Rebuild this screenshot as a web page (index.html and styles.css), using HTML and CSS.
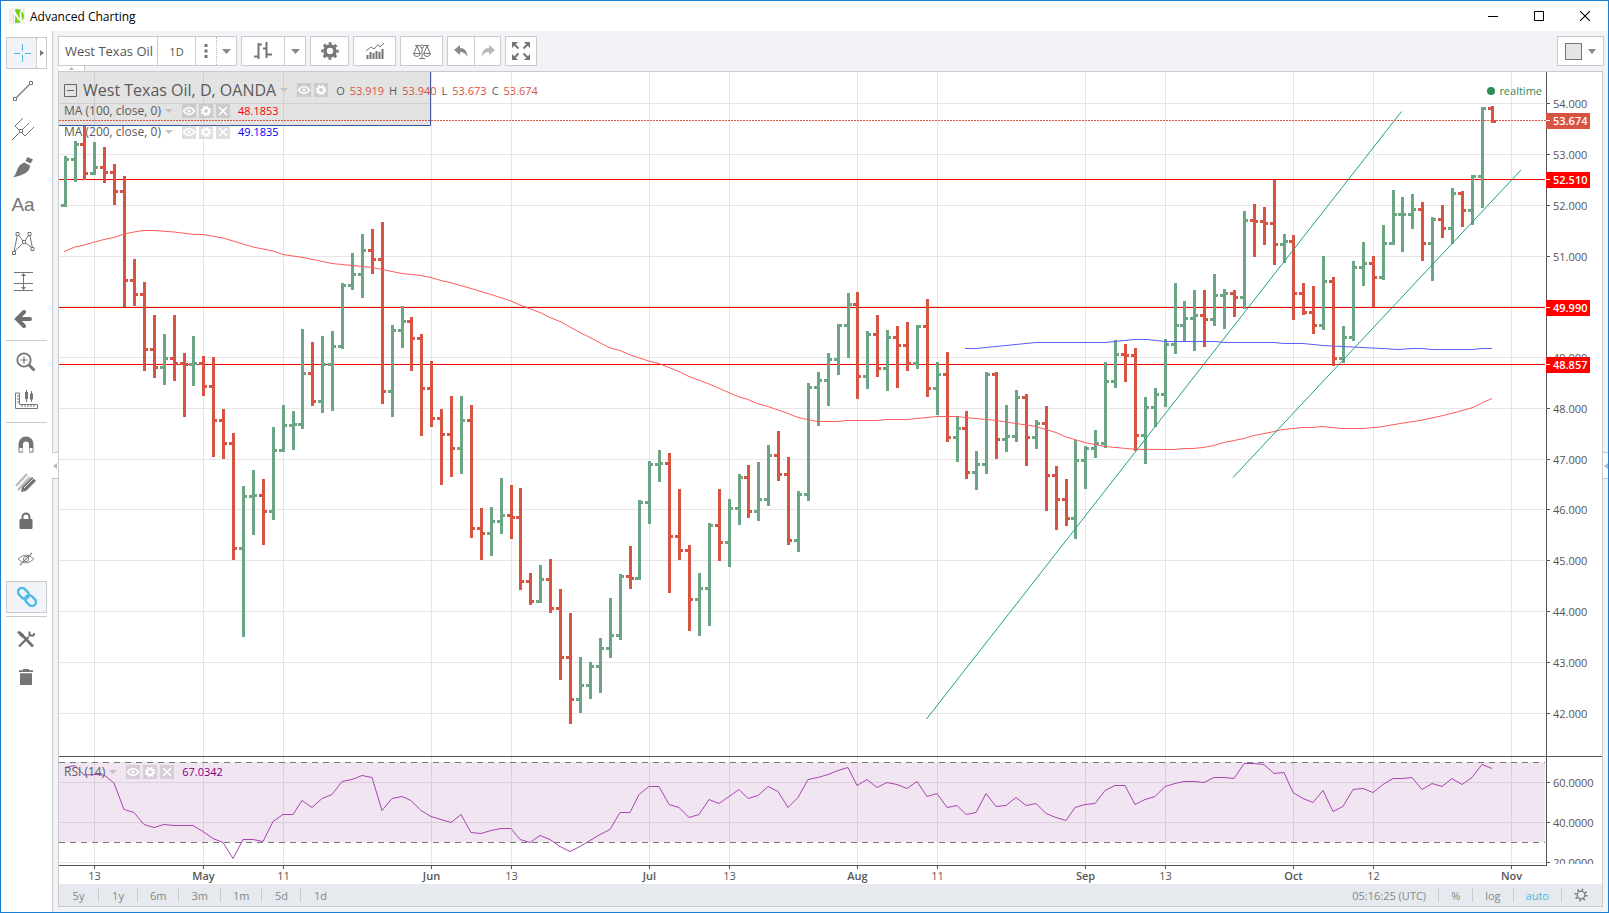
FILE: index.html
```html
<!DOCTYPE html>
<html lang="en">
<head>
<meta charset="utf-8">
<title>Advanced Charting</title>
<link rel="stylesheet" href="styles.css">
</head>
<body>
<header class="titlebar">
  <svg class="logo" width="16" height="16" viewBox="0 0 16 16"><rect width="16" height="16" fill="#efefef"/><circle cx="8" cy="8" r="7" fill="#7fd013"/><path d="M0 6C2 2 4 1 6.500 1L4 7V15C1.500 13.500 0 10 0 6Z" fill="#efefef"/><path d="M5 14.500C5.500 11 5.500 7 5 3C7.500 8 9.500 12 13 13.500C11 9 11 5 13 2" fill="none" stroke="#fff" stroke-width="1.700"/></svg>
  <h1 class="title">Advanced Charting</h1>
  <div class="window-buttons">
    <button class="win" aria-label="Minimize"><svg width="10" height="10" viewBox="0 0 10 10"><path d="M0 5.500H10" stroke="#000"/></svg></button>
    <button class="win" aria-label="Maximize"><svg width="10" height="10" viewBox="0 0 10 10"><path d="M.5.500H9.500V9.500H.5Z" fill="none" stroke="#000"/></svg></button>
    <button class="win" aria-label="Close"><svg width="10" height="10" viewBox="0 0 10 10"><path d="M0 0L10 10M10 0L0 10" stroke="#000" stroke-width="1.100"/></svg></button>
  </div>
</header>
<div class="workspace">
  <nav class="sidebar" aria-label="Drawing tools">
    <div class="tool split">
      <button class="split-main" aria-label="Cross"><svg width="18" height="18" viewBox="0 0 18 18"><path d="M9.500 0V7M9.500 11V18M1 9.500H7M12 9.500H18" stroke="#4bb9e6"/></svg></button>
      <button class="split-more" aria-label="More cursors"><svg width="4" height="6" viewBox="0 0 4 6"><path d="M0 0L4 3L0 6Z" fill="#777"/></svg></button>
    </div>
    <button class="tool" aria-label="Trend line"><svg width="22" height="22" viewBox="0 0 22 22"><path d="M4 18L17.500 4.500" stroke="#757575" stroke-width="1.200"/><path d="M1.500 17.500h3v3h-3zM17.500 1.500h3v3h-3z" fill="#fff" stroke="#757575"/></svg></button>
    <button class="tool" aria-label="Pitchfork"><svg width="24" height="24" viewBox="0 0 24 24"><path d="M1 23L18 6M12 1L4 9L14 19L23 10" fill="none" stroke="#757575"/><path d="M8.500 12.500h3v3h-3z" fill="#fff" stroke="#757575"/></svg></button>
    <button class="tool" aria-label="Brush"><svg width="22" height="22" viewBox="0 0 22 22"><path d="M15.500 1L21 3.500L18.500 7.500L13.500 5Z" fill="#757575"/><path d="M12.500 6.500L18 9.500C18 16 12 19 1 21.500C6 17 4 9 12.500 6.500Z" fill="#757575"/></svg></button>
    <button class="tool tool-text" aria-label="Text">Aa</button>
    <button class="tool" aria-label="Pattern"><svg width="24" height="24" viewBox="0 0 24 24"><path d="M3 21L6.500 3L13 11L18.500 3L21.500 17L13 11Z" fill="none" stroke="#757575"/><path d="M1.500 20.500h3v3h-3zM5 1.500h3v3h-3zM11.500 9.500h3v3h-3zM17 1.500h3v3h-3zM20 16.500h3v3h-3z" fill="#fff" stroke="#757575"/></svg></button>
    <button class="tool" aria-label="Position"><svg width="20" height="20" viewBox="0 0 20 20"><path d="M1 1.500H20M1 12.500H20M1 19.500H20M10.500 4V18" stroke="#757575"/><path d="M8 5L10.500 2L13 5ZM8 16L10.500 19L13 16Z" fill="#757575"/></svg></button>
    <button class="tool" aria-label="Arrow"><svg width="18" height="18" viewBox="0 0 18 18"><path d="M10 2L3 9L10 16M3 9H16" fill="none" stroke="#6f6f6f" stroke-width="4" stroke-linecap="round"/></svg></button>
    <hr class="rule">
    <button class="tool low" aria-label="Zoom in"><svg width="20" height="20" viewBox="0 0 20 20"><circle cx="8" cy="8" r="6.700" fill="none" stroke="#757575" stroke-width="1.800"/><path d="M8 4.500V11.500M4.500 8H11.500" stroke="#757575" stroke-width="1.200"/><path d="M13 13L18.500 18.500" stroke="#757575" stroke-width="3"/></svg></button>
    <button class="tool low" aria-label="Measure"><svg width="24" height="20" viewBox="0 0 24 20"><path d="M1.500 3h4v11.500h18v4h-22z" fill="none" stroke="#757575"/><path d="M3 6h2M3 9h2M3 12h2M8 17v-2M11 17v-2M14 17v-2M17 17v-2M20 17v-2M12.500 0v12M17.500 1v11" stroke="#757575"/><path d="M11 2h3v7h-3zM16 3.500h3v6h-3z" fill="#757575"/></svg></button>
    <hr class="rule wide">
    <button class="tool low" aria-label="Magnet"><svg width="16" height="18" viewBox="0 0 16 18"><path d="M.5 16.500V8a7.500 7.500 0 0 1 15 0V16.500H11V8.500a3 3 0 0 0-6 0V16.500Z" fill="#757575"/><path d="M1.500 12h3v3.500h-3zM11.500 12h3v3.500h-3z" fill="#fff"/></svg></button>
    <button class="tool low" aria-label="Stay in drawing mode"><svg width="22" height="22" viewBox="0 0 22 22"><path d="M1 14L12 2M3 18L15 5" stroke="#bcbcbc" stroke-width="2.500"/><path d="M7 15L17 5L21 9L11 19L6 20Z" fill="#757575"/><path d="M9 16L18 7" stroke="#fff" stroke-width=".8"/></svg></button>
    <button class="tool low" aria-label="Lock drawings"><svg width="14" height="18" viewBox="0 0 14 18"><rect x=".5" y="7" width="13" height="10" rx="1" fill="#6f6f6f"/><path d="M3.500 8V5a3.500 3.500 0 0 1 7 0V8" fill="none" stroke="#6f6f6f" stroke-width="2"/></svg></button>
    <button class="tool low" aria-label="Hide drawings"><svg width="18" height="14" viewBox="0 0 20 16"><path d="M1 8Q10-1 19 8Q10 17 1 8Z" fill="none" stroke="#757575"/><circle cx="10" cy="8" r="3" fill="none" stroke="#757575"/><path d="M3 15L17 1" stroke="#757575" stroke-width="1.200"/></svg></button>
    <button class="tool low active" aria-label="Link"><svg width="20" height="20" viewBox="0 0 20 20"><g transform="rotate(45 10 10)" fill="none" stroke="#4bb9e6" stroke-width="2.400"><rect x="-1" y="6" width="12" height="8" rx="4"/><rect x="9" y="6" width="12" height="8" rx="4"/></g></svg></button>
    <hr class="rule wide">
    <button class="tool low" aria-label="Tool settings"><svg width="18" height="18" viewBox="0 0 18 18"><path d="M4.500 4.500L16 16.500" stroke="#6f6f6f" stroke-width="2.600"/><path d="M0 2L2.500 1L7 4.500L4.500 7.500Z" fill="#6f6f6f"/><path d="M2 16.500L11.500 7" stroke="#6f6f6f" stroke-width="2.200"/><path d="M12.500 1.500V5.500H16.500L17.500 3" fill="none" stroke="#6f6f6f" stroke-width="2"/></svg></button>
    <button class="tool low" aria-label="Remove"><svg width="14" height="16" viewBox="0 0 14 16"><path d="M4 0h6v1.200h4V3H0V1.200H4ZM1 4.200h12V16H1Z" fill="#757575"/></svg></button>
  </nav>
  <main class="content">
    <button class="edge edge-left" aria-label="Hide sidebar"><svg width="4" height="6" viewBox="0 0 4 6"><path d="M4 0L0 3L4 6Z" fill="#b8b8b8"/></svg></button>
    <div class="toolbar">
      <div class="group">
        <button class="btn symbol">West Texas Oil</button>
        <button class="btn interval">1D</button>
        <button class="btn dots" aria-label="Intervals"><svg width="4" height="16" viewBox="0 0 4 16"><path d="M.5 1h3v3h-3zM.5 6.500h3v3h-3zM.5 12h3v3h-3z" fill="#757575"/></svg></button>
        <button class="btn caret" aria-label="More intervals"><svg width="9" height="5" viewBox="0 0 9 5"><path d="M0 0H9L4.500 5Z" fill="#8a8a8a"/></svg></button>
      </div>
      <div class="group">
        <button class="btn style" aria-label="Bars"><svg width="18" height="18" viewBox="0 0 18 18"><path d="M4.500 1V17M0 14.500H4M4 2.500H8M12.500 0V16M9 6.500H12M13 12.500H18" fill="none" stroke="#757575" stroke-width="2"/></svg></button>
        <button class="btn style-more" aria-label="Chart styles"><svg width="9" height="5" viewBox="0 0 9 5"><path d="M0 0H9L4.500 5Z" fill="#8a8a8a"/></svg></button>
      </div>
      <div class="group"><button class="btn gear" aria-label="Settings"><svg width="18" height="18" viewBox="-9 -9 18 18"><circle r="5" fill="none" stroke="#757575" stroke-width="3.600"/><circle r="7.600" fill="none" stroke="#757575" stroke-width="2.400" stroke-dasharray="3 2.970" stroke-dashoffset="1.500"/></svg></button></div>
      <div class="group"><button class="btn indicators" aria-label="Indicators"><svg width="18" height="16" viewBox="0 0 18 16"><path d="M1.500 16V12M4.500 16V9M7.500 16V10M10.500 16V8M13.500 16V9M16.500 16V6" stroke="#757575" stroke-width="2"/><path d="M0 8L5 4L8 6L12 1.500L14 4L18 0" fill="none" stroke="#757575"/></svg></button></div>
      <div class="group"><button class="btn compare" aria-label="Compare"><svg width="18" height="15" viewBox="0 0 18 15"><path d="M2 1.500H7.500M10.500 1.500H16M6 14.500H12M9 4V14M4 2L1 9M4 2L7 9M14 2L11 9M14 2L17 9" fill="none" stroke="#757575"/><circle cx="9" cy="2.500" r="1.500" fill="none" stroke="#757575"/><path d="M.5 9.500h7q-.5 3-3.500 3t-3.500-3zM10.500 9.500h7q-.5 3-3.500 3t-3.500-3z" fill="#fff" stroke="#757575"/></svg></button></div>
      <div class="group">
        <button class="btn undo" aria-label="Undo"><svg width="14" height="12" viewBox="0 0 14 12"><path d="M0 5L6 0V3Q13 3 13.500 12Q11 7 6 7V10Z" fill="#8a8a8a"/></svg></button>
        <button class="btn redo" aria-label="Redo"><svg width="14" height="12" viewBox="0 0 14 12"><path d="M14 5L8 0V3Q1 3 .5 12Q3 7 8 7V10Z" fill="#b8b8b8"/></svg></button>
      </div>
      <div class="group"><button class="btn full" aria-label="Fullscreen"><svg width="18" height="18" viewBox="0 0 18 18"><path d="M0 0H6L0 6ZM18 0H12L18 6ZM0 18H6L0 12ZM18 18H12L18 12Z" fill="#757575"/><path d="M2 2L6.500 6.500M16 2L11.500 6.500M2 16L6.500 11.500M16 16L11.500 11.500" stroke="#757575" stroke-width="2"/></svg></button></div>
      <div class="group layout"><button class="btn layout-btn" aria-label="Layout"><span class="swatch"></span><svg width="8" height="5" viewBox="0 0 8 5"><path d="M0 0H8L4 5Z" fill="#8a8a8a"/></svg></button></div>
    </div>
    <button class="toptab" aria-label="Hide toolbar"><svg width="5" height="3" viewBox="0 0 5 3"><path d="M0 3L2.500 0L5 3Z" fill="#b8b8b8"/></svg></button>
    <section class="frame">
      <div class="plot">
        <svg id="chart" class="chart" role="img" aria-label="West Texas Oil daily price chart"></svg>
        <div class="legend">
          <div class="line head">
            <svg width="13" height="13" viewBox="0 0 13 13"><path d="M.5.500H12.500V12.500H.5ZM3 6.500H10" fill="none" stroke="#666"/></svg>
            <h2 class="name">West Texas Oil, D, OANDA</h2>
            <i class="tri"></i>
            <span class="minis">
              <button class="mini" aria-label="Hide"><svg width="14" height="14" viewBox="0 0 14 14"><path d="M1.500 7Q7 0 12.500 7Q7 14 1.500 7Z" fill="none" stroke="#fff" stroke-width="1.400"/><circle cx="7" cy="7" r="1.600" fill="#fff"/></svg></button>
              <button class="mini" aria-label="Format"><svg width="14" height="14" viewBox="-7 -7 14 14"><circle r="3" fill="none" stroke="#fff" stroke-width="2"/><circle r="4.500" fill="none" stroke="#fff" stroke-width="1.600" stroke-dasharray="1.800 1.734"/></svg></button>
            </span>
            <span class="ohlc"><span>O</span><b>53.919</b><span>H</span><b>53.940</b><span>L</span><b>53.673</b><span>C</span><b>53.674</b></span>
          </div>
          <div class="line">
            <span class="study">MA (100, close, 0)</span><i class="tri"></i>
            <span class="minis">
              <button class="mini" aria-label="Hide"><svg width="14" height="14" viewBox="0 0 14 14"><path d="M1.500 7Q7 0 12.500 7Q7 14 1.500 7Z" fill="none" stroke="#fff" stroke-width="1.400"/><circle cx="7" cy="7" r="1.600" fill="#fff"/></svg></button>
              <button class="mini" aria-label="Format"><svg width="14" height="14" viewBox="-7 -7 14 14"><circle r="3" fill="none" stroke="#fff" stroke-width="2"/><circle r="4.500" fill="none" stroke="#fff" stroke-width="1.600" stroke-dasharray="1.800 1.734"/></svg></button>
              <button class="mini" aria-label="Remove"><svg width="14" height="14" viewBox="0 0 14 14"><path d="M3 3L11 11M11 3L3 11" stroke="#fff" stroke-width="1.600"/></svg></button>
            </span>
            <span class="value red">48.1853</span>
          </div>
          <div class="line">
            <span class="study">MA (200, close, 0)</span><i class="tri"></i>
            <span class="minis">
              <button class="mini" aria-label="Hide"><svg width="14" height="14" viewBox="0 0 14 14"><path d="M1.500 7Q7 0 12.500 7Q7 14 1.500 7Z" fill="none" stroke="#fff" stroke-width="1.400"/><circle cx="7" cy="7" r="1.600" fill="#fff"/></svg></button>
              <button class="mini" aria-label="Format"><svg width="14" height="14" viewBox="-7 -7 14 14"><circle r="3" fill="none" stroke="#fff" stroke-width="2"/><circle r="4.500" fill="none" stroke="#fff" stroke-width="1.600" stroke-dasharray="1.800 1.734"/></svg></button>
              <button class="mini" aria-label="Remove"><svg width="14" height="14" viewBox="0 0 14 14"><path d="M3 3L11 11M11 3L3 11" stroke="#fff" stroke-width="1.600"/></svg></button>
            </span>
            <span class="value blue">49.1835</span>
          </div>
        </div>
        <div class="status"><i class="dot"></i>realtime</div>
        <div class="legend legend-rsi">
          <div class="line">
            <span class="study">RSI (14)</span><i class="tri"></i>
            <span class="minis">
              <button class="mini" aria-label="Hide"><svg width="14" height="14" viewBox="0 0 14 14"><path d="M1.500 7Q7 0 12.500 7Q7 14 1.500 7Z" fill="none" stroke="#fff" stroke-width="1.400"/><circle cx="7" cy="7" r="1.600" fill="#fff"/></svg></button>
              <button class="mini" aria-label="Format"><svg width="14" height="14" viewBox="-7 -7 14 14"><circle r="3" fill="none" stroke="#fff" stroke-width="2"/><circle r="4.500" fill="none" stroke="#fff" stroke-width="1.600" stroke-dasharray="1.800 1.734"/></svg></button>
              <button class="mini" aria-label="Remove"><svg width="14" height="14" viewBox="0 0 14 14"><path d="M3 3L11 11M11 3L3 11" stroke="#fff" stroke-width="1.600"/></svg></button>
            </span>
            <span class="value purple">67.0342</span>
          </div>
        </div>
      </div>
      <footer class="footer">
        <div class="ranges">
          <button class="range">5y</button><button class="range">1y</button><button class="range">6m</button><button class="range">3m</button><button class="range">1m</button><button class="range">5d</button><button class="range">1d</button>
        </div>
        <div class="options">
          <button class="range clock">05:16:25 (UTC)</button><button class="range">%</button><button class="range">log</button><button class="range auto">auto</button><button class="range" aria-label="Scale settings"><svg width="14" height="14" viewBox="-7 -7 14 14"><circle r="3.800" fill="none" stroke="#777" stroke-width="1.300"/><circle r="5.500" fill="none" stroke="#777" stroke-width="2" stroke-dasharray="1.500 2.820"/></svg></button>
        </div>
      </footer>
    </section>
    <button class="edge edge-right" aria-label="Show panel"><svg width="4" height="6" viewBox="0 0 4 6"><path d="M4 0L0 3L4 6Z" fill="#b8b8b8"/></svg></button>
  </main>
</div>
<script src="chart.js"></script>
</body>
</html>
```
FILE: styles.css
```css
* { box-sizing: border-box; }
body {
  margin: 0;
  height: 100vh;
  display: flex;
  flex-direction: column;
  border: 1px solid #1a7fd4;
  background: #fff;
  color: #555;
  font-family: "Open Sans", "Noto Sans", sans-serif;
  font-size: 12px;
  overflow: hidden;
}
button {
  display: flex;
  align-items: center;
  justify-content: center;
  margin: 0;
  padding: 0;
  border: 0;
  background: none;
  color: inherit;
  font: inherit;
}
svg { display: block; flex: none; }

.titlebar { flex: none; height: 30px; display: flex; align-items: center; padding-left: 8px; }
.title { margin: 0 0 0 5px; font-size: 12px; font-weight: 400; color: #000; }
.window-buttons { margin-left: auto; display: flex; }
.win { width: 46px; height: 28px; }

.workspace { flex: 1; min-height: 0; display: flex; }
.sidebar {
  width: 52px;
  flex: none;
  padding: 3px 5px 0;
  border-right: 1px solid #c9cbcd;
}
.tool { width: 34px; height: 38px; }
.tool.low { width: 40px; }
.tool-text { font: 19px "Liberation Sans", sans-serif; color: #757575; }
.split {
  display: flex;
  width: 41px;
  height: 32px;
  margin: 3px 0;
  border: 1px solid #c9cbcd;
}
.split-main { flex: 1; background: #f0f3f7; border-right: 1px dotted #b5b5b5; }
.split-more { width: 9px; }
.tool.active { width: 41px; height: 32px; margin: 3px 0; border: 1px solid #c9cbcd; background: #f0f3f7; }
.rule { width: 41px; height: 1px; margin: 2px 0; border: 0; background: #c9cbcd; }
.rule.wide { margin: 3px 0; }

.content {
  position: relative;
  flex: 1;
  min-width: 0;
  display: flex;
  flex-direction: column;
  padding: 5px 4px 5px 5px;
  background: #f1f3f7;
}
.toolbar { flex: none; display: flex; gap: 4px; }
.group { display: flex; height: 30px; border: 1px solid #c9cbcd; background: #fff; }
.btn + .btn { border-left: 1px solid #c9cbcd; }
.symbol { width: 98px; padding-left: 2px; font-size: 13px; }
.interval { width: 38px; font-size: 11px; }
.dots { width: 21px; }
.btn.caret { width: 20px; border-left: 1px dotted #b5b5b5; }
.style { width: 42px; }
.style-more { width: 21px; }
.gear { width: 37px; }
.indicators, .compare { width: 41px; }
.undo, .redo { width: 26px; }
.full { width: 30px; }
.layout { margin-left: auto; }
.layout-btn { width: 45px; gap: 6px; }
.swatch { width: 17px; height: 17px; border: 1px solid #757575; background: #e5e5e5; }
.toptab {
  width: 26px;
  height: 5px;
  margin-left: 1px;
  flex: none;
  border-right: 1px solid #c9cbcd;
  background: #fff;
}
.edge { position: absolute; top: 421px; height: 27px; width: 6px; border: solid #c9cbcd; border-width: 1px 0; background: #fff; }
.edge-left { left: -1px; }
.edge-right { right: 0; width: 5px; }

.frame {
  flex: 1;
  min-height: 0;
  display: flex;
  flex-direction: column;
  margin-right: 1px;
  border: 1px solid #c9cbcd;
  background: #fff;
}
.plot { position: relative; flex: 1; min-height: 0; }
.chart { width: 100%; height: 100%; }
.chart text { font-size: 11px; fill: #555; }
.chart .month { font-weight: 600; }
.chart .tag { font-weight: 600; fill: #fff; }

.legend { position: absolute; top: 8px; left: 5px; color: #5a5a5a; }
.legend-rsi { top: 689px; }
.line { display: flex; align-items: center; height: 21px; white-space: nowrap; }
.line.head { height: 20px; }
.name { margin: 0 0 0 6px; font-size: 16px; font-weight: 500; }
.study { font-size: 12px; }
.tri { margin-left: 4px; border: solid transparent; border-width: 4px 4px 0; border-top-color: #c2c2c2; }
.minis { display: flex; gap: 3px; margin-left: 9px; }
.mini { width: 14px; height: 14px; background: rgba(150, 150, 150, .3); }
.ohlc { display: flex; gap: 5px; margin-left: 8px; font-size: 11px; }
.ohlc b { font-weight: 400; color: #d75442; }
.value { margin-left: 8px; font-size: 11px; }
.red { color: #f00; }
.blue { color: #00f; }
.purple { color: #800080; }
.status { position: absolute; top: 8px; right: 60px; height: 21px; display: flex; align-items: center; gap: 4px; font-size: 11px; color: #2e8b57; }
.dot { width: 8px; height: 8px; border-radius: 50%; background: #2e8b57; }

.footer { flex: none; height: 22px; display: flex; justify-content: space-between; background: #e6e9ed; color: #85888c; }
.ranges, .options { display: flex; align-items: center; }
.range { min-width: 39px; height: 14px; padding: 0 12px; font-size: 11px; }
.options .range { min-width: 34px; }
.range + .range { border-left: 1px solid #c9cbcd; }
.options { padding-right: 2px; }
.clock, .auto { font-weight: 500; }
.auto { color: #4bb9e6; }
```
FILE: chart.js
```js
const NS = 'http://www.w3.org/2000/svg';
const svg = document.getElementById('chart');
const LEFT = 59, TOP = 72;
const UP = '#6ba583', DOWN = '#d75442';
const FIRST_OPEN = 205;

// direction, high, low, close; each bar opens at the previous close
const bars = `
G156,207,159 G141,182,144 R125,180,173 G142,175,167 R147,183,172 R164,205,191 R176,307,280 R259,306,294 R282,371,349 R315,378,367
G334,385,358 R315,381,363 R353,417,364 G336,386,363 R356,396,386 R357,457,420 R409,459,443 R433,560,548 G486,637,496 G470,535,495
R479,545,511 G427,520,450 G405,452,425 G411,450,424 G329,429,373 R342,406,401 G336,413,364 G331,411,346 G283,349,285 G253,290,274
G234,298,250 R229,274,259 R222,404,391 G325,417,330 G306,348,321 R317,371,338 R334,436,388 R361,427,418 R409,485,434 R396,477,448
G396,474,420 R405,538,528 R508,560,533 G507,556,521 G478,534,515 R485,539,517 R488,590,581 R573,605,601 G565,603,579 R559,613,608
R589,680,657 R613,724,699 G657,713,685 G662,699,666 G638,693,648 G598,658,635 G574,640,576 R546,589,578 G500,580,502 G461,524,464
G450,482,463 R453,593,536 R489,560,550 R545,631,599 G573,636,588 G523,626,525 R489,561,542 G499,567,508 G474,525,477 R465,518,511
G462,521,499 G445,506,455 R431,481,474 R457,545,540 G491,552,494 G383,501,387 G372,426,380 G353,406,359 G324,375,325 G293,358,304
R292,399,376 G331,389,334 R315,377,368 G330,391,337 R326,388,345 R322,371,363 G325,369,326 R299,397,388 G362,415,374 R352,442,437
G416,462,428 R411,479,472 G451,490,464 G372,474,374 R372,459,439 G405,452,436 G390,442,397 R394,466,437 G420,449,423 R406,511,475
R466,530,499 R479,526,518 G440,539,460 G446,489,448 G430,458,443 G362,448,381 G340,388,354 R344,382,355 R348,451,435 G397,464,407
G388,427,394 G339,407,344 G283,354,325 G301,341,318 G290,351,315 R290,347,319 G274,326,295 G289,329,293 R290,317,297 G211,309,220
R204,257,221 R207,245,223 R180,265,244 G234,263,241 R235,320,293 R283,315,312 R286,334,325 G256,330,281 R277,366,358 G326,363,337
G261,341,267 G242,286,263 R256,307,277 G225,280,243 G190,245,214 G197,252,214 G194,229,209 R202,261,243 G217,281,219 R205,238,228
G188,244,193 R191,227,210 G175,225,176 G107,208,108 R106,123,121`.trim().split(/\s+/);

const rsi = [767.5,765.5,775,774.5,775,783,809.5,812.5,824.5,827.5,824.5,825.5,825.5,825.5,831.5,838.5,842.5,858.5,839.5,839.5,841.5,821.5,814.5,814.5,800.5,807.5,798.5,794.5,781.5,779.5,775.5,777.5,810.5,798.5,796.5,800.5,810.5,816.5,819.5,822.5,814.5,832.5,833.5,830.5,828.5,828.5,839.5,842.5,835.5,839.5,846.5,851.5,846.5,840.5,834.5,829.5,812.5,812.5,794.5,786.5,786.5,804.5,807.5,817.5,814.5,799.5,803.5,796.5,789.5,798.5,795.5,786.5,791.5,807.5,797.5,779.5,777.5,774.5,770.5,767.5,785.5,779.5,787.5,782.5,784.5,788.5,781.5,796.5,793.5,807.5,805.5,814.5,812.5,793.5,806.5,805.5,797.5,805.5,803.5,813.5,817.5,820.5,807.5,804.5,803.5,790.5,785.5,785.5,804.5,799.5,796.5,786.5,783.5,781.5,781.5,782.5,777.5,777.5,778.5,763.5,763.5,764.5,773.5,772.5,792.5,798.5,802.5,790.5,811.5,806.5,789.5,788.5,792.5,784.5,778.5,778.5,777.5,789.5,783.5,786.5,778.5,784.5,777.5,764.5,768.5];

const ma100 = '64,251.5 75,247 84,245 104,239.5 114,237.5 124,234 134,232 143,230.5 154,230.5 174,232 193,234.3 203,234.5 223,238 253,247 273,251 283,254.5 293,256 303,257.5 332,263.5 372,267.5 402,273.5 421,275.5 431,277.5 441,280.5 451,282.8 471,288.5 491,294.5 511,301 520,305 540,312.5 550,317.5 560,321.5 580,332.5 590,337.5 609,347.5 620,350.5 629,354.5 650,361.5 659,363.5 679,371.5 689,376.5 709,384 738,396.5 748,399.5 757,403.5 768,406.5 788,413.5 798,417.5 817,421.5 837,421.5 847,420.5 877,420.5 887,419.5 907,419.5 937,416.5 956,416.5 976,418.5 997,420.5 1016,423.5 1036,426.5 1056,432.5 1066,437 1085,442.5 1105,446.5 1135,449.3 1174,449.5 1184,448.5 1193,448.5 1203,447.5 1214,445.5 1224,442.5 1244,438.5 1254,435.5 1273,431.8 1283,429.5 1303,427.5 1312,427.5 1322,426.5 1342,428.5 1363,428.5 1380,427 1400,423.5 1420,420.5 1441,416 1457,412 1473,407.5 1483,402.5 1492,398.5';
const ma200 = '965,348.5 976,348.5 1006,345.5 1036,342.5 1105,342.5 1134,339.5 1147,339.5 1165,341.5 1215,341.5 1225,342.5 1274,342.5 1284,343.5 1303,343.5 1323,345.5 1342,346.5 1362,347.5 1382,348.5 1398,349.5 1413,348.5 1422,348.5 1432,349.5 1472,349.5 1482,348.5 1492,348.5';

const dates = [[94,'13'],[203,'May',1],[283,'11'],[431,'Jun',1],[511,'13'],[649,'Jul',1],[729,'13'],[857,'Aug',1],[937,'11'],[1085,'Sep',1],[1165,'13'],[1293,'Oct',1],[1373,'12'],[1511,'Nov',1]];
const prices = [103,154,205,256,306,357,408,459,509,560,611,662,713];

const barX = i => Math.floor(65.13 + 9.91 * i);

function add(tag, attrs, text) {
  const el = document.createElementNS(NS, tag);
  for (const k in attrs) el.setAttribute(k, attrs[k]);
  if (text !== undefined) el.textContent = text;
  svg.appendChild(el);
}
const rect = (x, y, width, height, fill) => add('rect', { x, y, width, height, fill });
const line = (points, stroke) => add('polyline', { points, stroke, fill: 'none' });

function draw() {
  const w = svg.clientWidth, h = svg.clientHeight;
  svg.replaceChildren();
  svg.setAttribute('viewBox', `${LEFT} ${TOP} ${w} ${h}`);
  const axis = LEFT + w - 56;
  const plotW = axis - 1 - LEFT;

  dates.forEach(([x]) => rect(x, TOP, 1, 793, '#e6e6e6'));
  prices.concat(782, 822, 862).forEach(y => rect(LEFT, y, plotW, 1, '#e6e6e6'));
  add('rect', { x: LEFT, y: 762, width: plotW, height: 80, fill: '#800080', 'fill-opacity': .1 });
  [762.5, 842.5].forEach(y => add('path', { d: `M${LEFT} ${y}H${axis - 1}`, stroke: '#777', 'stroke-dasharray': '6 5' }));

  [179, 307, 364].forEach(y => rect(LEFT, y, plotW, 1, '#f00'));

  let open = FIRST_OPEN;
  bars.forEach((b, i) => {
    const [high, low, close] = b.slice(1).split(',').map(Number);
    const color = b[0] === 'G' ? UP : DOWN, x = barX(i);
    rect(x - 1, high, 3, low - high, color);
    rect(x - 4, open - 1, 4, 3, color);
    rect(x + 1, close - 1, 3, 3, color);
    open = close;
  });

  add('rect', { x: LEFT, y: TOP, width: 371, height: 53, fill: '#808080', 'fill-opacity': .22 });
  add('path', { d: `M${LEFT} 125.5H430.5V${TOP}`, fill: 'none', stroke: '#3a55a4' });
  line(ma100, '#ff5c5c');
  line(ma200, '#5c5cff');
  line('926.5,719 1401.5,111.5', '#1fa083');
  line('1233,477.5 1521,170', '#1fa083');
  add('path', { d: `M${LEFT} 120.5H${axis}`, stroke: DOWN, 'stroke-dasharray': '2 1' });
  line(rsi.map((y, i) => `${barX(i)},${y}`).join(' '), '#a845b0');

  rect(LEFT, 756, w, 1, '#555');
  rect(LEFT, 865, axis - LEFT + 1, 1, '#555');
  rect(axis, TOP, 1, 794, '#555');

  prices.forEach((y, i) => {
    rect(axis, y, 4, 1, '#555');
    add('text', { x: axis + 7, y: y + 5 }, `${54 - i}.000`);
  });
  [[782, '60.0000'], [822, '40.0000']].forEach(([y, t]) => {
    rect(axis, y, 4, 1, '#555');
    add('text', { x: axis + 7, y: y + 5 }, t);
  });
  rect(axis, 862, 4, 1, '#555');
  add('text', { x: axis + 7, y: 867 }, '20.0000');
  rect(axis + 1, 864, 55, 10, '#fff');

  [[120, '53.674', DOWN], [179, '52.510', '#f00'], [307, '49.990', '#f00'], [364, '48.857', '#f00']].forEach(([y, t, c]) => {
    rect(axis, y - 7, 44, 16, c);
    rect(axis, y, 4, 1, '#fff');
    add('text', { x: axis + 7, y: y + 5, class: 'tag' }, t);
  });

  dates.forEach(([x, t, month]) => {
    rect(x, 866, 1, 3, '#555');
    add('text', { x: x + .5, y: 880, 'text-anchor': 'middle', class: month ? 'month' : 'day' }, t);
  });
}
draw();
addEventListener('resize', draw);
```
